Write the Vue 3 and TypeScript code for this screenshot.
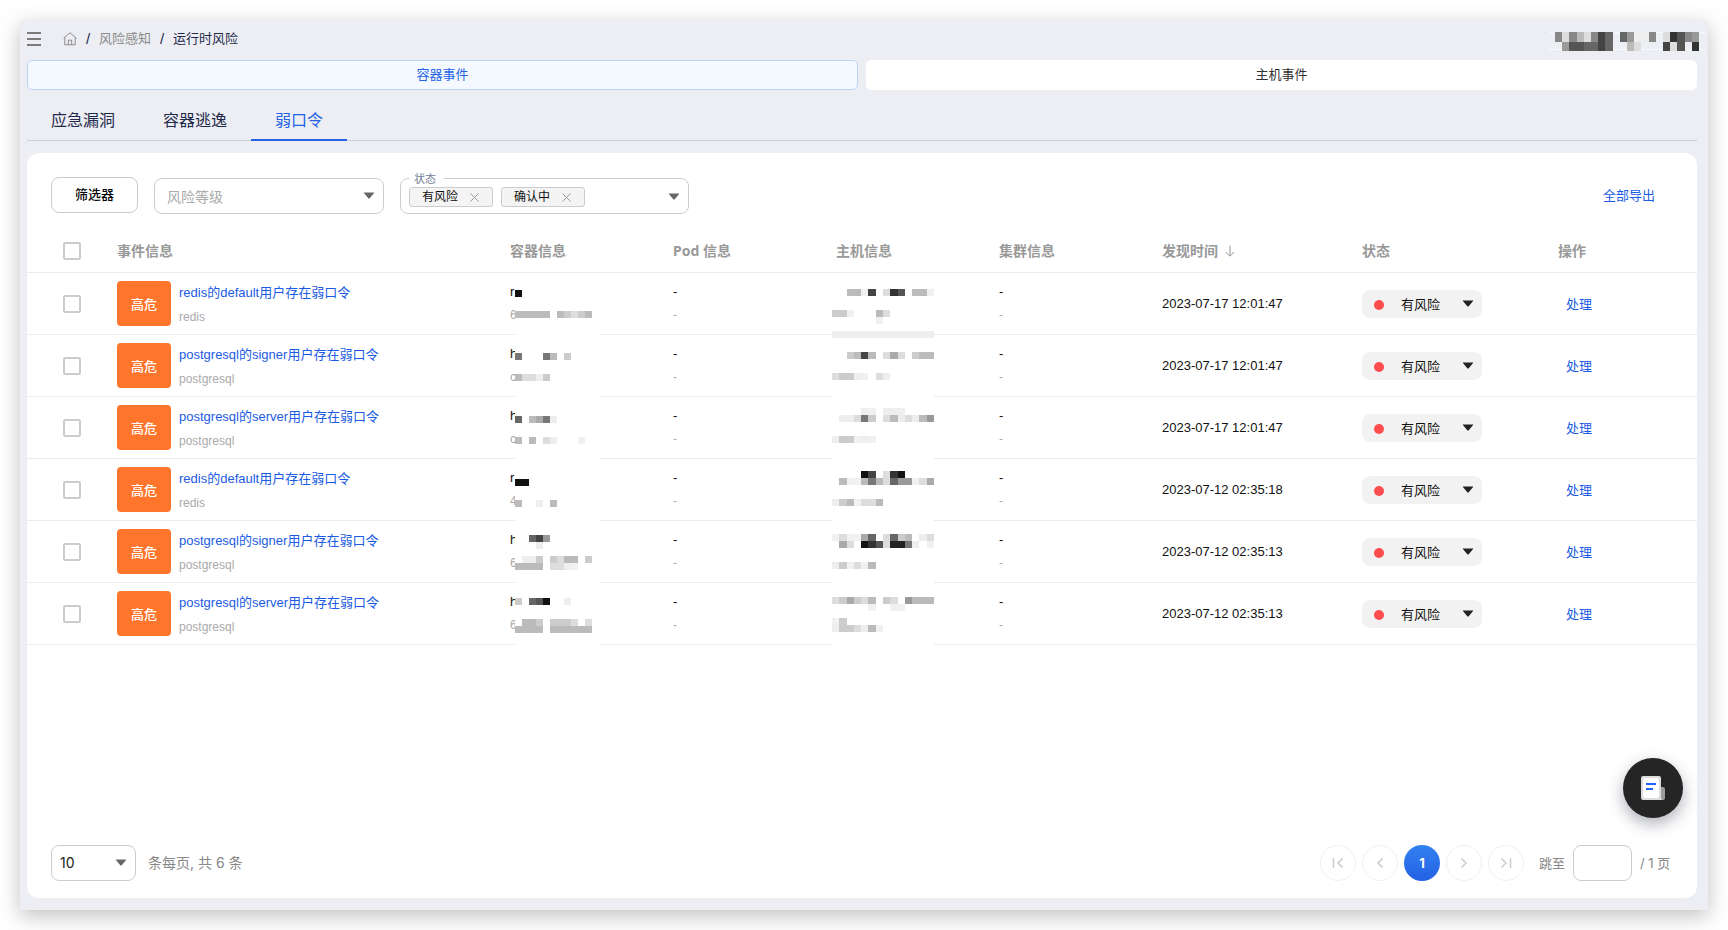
<script setup lang="ts">
import { reactive, ref } from 'vue'

interface Band {
  y: number
  cells: string
}

interface EventRow {
  title: string
  source: string
  time: string
  name: string
  id: string
  container: Band[]
  host: Band[]
}

const topTabs = ['容器事件', '主机事件']
const subTabs = ['应急漏洞', '容器逃逸', '弱口令']
const activeTop = ref(0)
const activeSub = ref(2)
const tags = ref(['有风险', '确认中'])
const selected = reactive<Record<number, boolean>>({})

const columns = ['事件信息', '容器信息', 'Pod 信息', '主机信息', '集群信息', '发现时间', '状态', '操作']

const rows: EventRow[] = [
  {
    title: 'redis的default用户存在弱口令',
    source: 'redis',
    time: '2023-07-17 12:01:47',
    name: 'r',
    id: '6',
    container: [{ y: 17, cells: '1' }, { y: 38, cells: 'bbbbb.bcdcb' }],
    host: [
      { y: 16, cells: '..bbf4.d35.bbf' },
      { y: 37, cells: 'ccf...bd' },
      { y: 44, cells: '......f' },
      { y: 58, cells: 'eeeeeeeeeeeeee' },
    ],
  },
  {
    title: 'postgresql的signer用户存在弱口令',
    source: 'postgresql',
    time: '2023-07-17 12:01:47',
    name: 'h',
    id: 'c',
    container: [{ y: 18, cells: '7...7b.c' }, { y: 39, cells: 'bddec' }],
    host: [
      { y: -4, cells: 'eeeeeeeeeeeeee' },
      { y: 17, cells: '..cb4b.dad.cbb' },
      { y: 38, cells: 'dccef.de' },
    ],
  },
  {
    title: 'postgresql的server用户存在弱口令',
    source: 'postgresql',
    time: '2023-07-17 12:01:47',
    name: 'h',
    id: 'c',
    container: [{ y: 19, cells: '6.ba7e' }, { y: 40, cells: 'b.b.de...f' }],
    host: [
      { y: 11, cells: '....ef.eee' },
      { y: 18, cells: '.eed7c.dbedeb9' },
      { y: 39, cells: 'eccfef' },
    ],
  },
  {
    title: 'redis的default用户存在弱口令',
    source: 'redis',
    time: '2023-07-12 02:35:18',
    name: 'r',
    id: '4',
    container: [{ y: 20, cells: '11' }, { y: 41, cells: 'b..e.b' }],
    host: [
      { y: 12, cells: '....14.d31' },
      { y: 19, cells: '.bffb7bd699fda' },
      { y: 40, cells: 'ecbfddb' },
    ],
  },
  {
    title: 'postgresql的signer用户存在弱口令',
    source: 'postgresql',
    time: '2023-07-12 02:35:13',
    name: 'h',
    id: '6',
    container: [
      { y: 14, cells: '..649' },
      { y: 21, cells: '...e' },
      { y: 35, cells: '.eec.cdbb.c' },
      { y: 42, cells: 'bbbb.ddef' },
    ],
    host: [
      { y: 13, cells: 'fdffa6.d6cb.ed' },
      { y: 20, cells: '.ad.135d227e.f' },
      { y: 41, cells: 'ecfdfb' },
    ],
  },
  {
    title: 'postgresql的server用户存在弱口令',
    source: 'postgresql',
    time: '2023-07-12 02:35:13',
    name: 'h',
    id: '6',
    container: [
      { y: 15, cells: 'c.651..e' },
      { y: 36, cells: '.bbc.cccd.d' },
      { y: 43, cells: 'bbbb.bbbbbb' },
    ],
    host: [
      { y: 14, cells: 'dcacdb.cd.9bbb' },
      { y: 21, cells: '.....f..ff' },
      { y: 35, cells: 'fc' },
      { y: 42, cells: 'eccdebf' },
    ],
  },
]

const accountBands: Band[] = [
  { y: 0, cells: '8d8bd846.69ee8.d3589' },
  { y: 7, cells: '.9556646..bd...4d5.3' },
]

// Expands bands of hex grey levels into 7 × 7 blocks; a dot leaves a block clear.
function blocks(bands: Band[]) {
  return bands.flatMap((band) =>
    [...band.cells].flatMap((c, i) =>
      c === '.' ? [] : [{ x: i * 7, y: band.y, fill: c === 'f' ? '#f1f1f1' : `#${c}${c}${c}` }],
    ),
  )
}

function removeTag(tag: string) {
  tags.value = tags.value.filter((t) => t !== tag)
}

function toggleAll(e: Event) {
  const on = (e.target as HTMLInputElement).checked
  rows.forEach((_, i) => (selected[i] = on))
}
</script>

<template>
  <div class="page">
    <div class="window">
      <header class="topbar">
        <button class="menu" type="button" aria-label="菜单">
          <svg width="14" height="14" viewBox="0 0 14 14"><path d="M0 1h14M0 7h14M0 13h14" stroke="#555" stroke-width="1.5" /></svg>
        </button>
        <nav class="crumbs" aria-label="breadcrumb">
          <a href="#" aria-label="首页" class="home">
            <svg width="14" height="14" viewBox="0 0 14 14" fill="none" stroke="#8c8c8c" stroke-linejoin="round">
              <path d="M.6 6.2 7 .8l6.4 5.4M1.8 5.4v7.4h10.4V5.4M5.3 12.6V8.2h3.4v4.4" />
            </svg>
          </a>
          <span class="slash">/</span>
          <a href="#">风险感知</a>
          <span class="slash">/</span>
          <span>运行时风险</span>
        </nav>
        <svg class="account" width="157" height="19" viewBox="0 0 157 19" aria-hidden="true">
          <rect width="157" height="19" fill="#eceff3" />
          <path d="M0 .5h157M0 17.5h157" stroke="#f6f8fa" />
          <svg x="6" y="0" width="144" height="19" viewBox="0 0 140 14" preserveAspectRatio="none" shape-rendering="crispEdges">
            <rect v-for="(b, i) in blocks(accountBands)" :key="i" :x="b.x" :y="b.y" width="7" height="7" :fill="b.fill" />
          </svg>
        </svg>
      </header>

      <div class="segments">
        <button
          v-for="(t, i) in topTabs"
          :key="t"
          type="button"
          :class="['segment', { active: activeTop === i }]"
          @click="activeTop = i"
        >{{ t }}</button>
      </div>

      <nav class="tabs">
        <button
          v-for="(t, i) in subTabs"
          :key="t"
          type="button"
          :class="['tab', { active: activeSub === i }]"
          @click="activeSub = i"
        >{{ t }}</button>
      </nav>

      <main class="panel">
        <div class="toolbar">
          <button class="filter" type="button">筛选器</button>
          <div class="picker level">
            <select aria-label="风险等级">
              <option>风险等级</option>
            </select>
            <svg class="caret" width="12" height="7" viewBox="0 0 12 7"><path d="M1.2.5h9.6q.8 0 .3.6L6.7 6.3q-.7.7-1.4 0L.9 1.1Q.4.5 1.2.5Z" fill="#666" /></svg>
          </div>
          <div class="picker states" role="group" aria-labelledby="state-label">
            <span id="state-label" class="float-label">状态</span>
            <span v-for="tag in tags" :key="tag" class="tag">
              {{ tag }}
              <button type="button" :aria-label="`移除 ${tag}`" @click="removeTag(tag)">
                <svg width="9" height="9" viewBox="0 0 9 9"><path d="m.5.5 8 8m0-8-8 8" stroke="#999" /></svg>
              </button>
            </span>
            <button class="open" type="button" aria-label="展开状态">
              <svg width="12" height="7" viewBox="0 0 12 7"><path d="M1.2.5h9.6q.8 0 .3.6L6.7 6.3q-.7.7-1.4 0L.9 1.1Q.4.5 1.2.5Z" fill="#666" /></svg>
            </button>
          </div>
          <a class="export" href="#">全部导出</a>
        </div>

        <table>
          <colgroup>
            <col class="c-check" />
            <col class="c-event" />
            <col class="c-info" />
            <col class="c-info" />
            <col class="c-info" />
            <col class="c-info" />
            <col class="c-time" />
            <col class="c-state" />
            <col class="c-action" />
          </colgroup>
          <thead>
            <tr>
              <th class="check"><input type="checkbox" aria-label="全选" @change="toggleAll" /></th>
              <th v-for="c in columns" :key="c" scope="col">
                {{ c }}
                <svg v-if="c === '发现时间'" class="sort" width="10" height="12" viewBox="0 0 10 12" fill="none" stroke="#999">
                  <path d="M5 .5V11M.8 7 5 11.2 9.2 7" />
                </svg>
              </th>
            </tr>
          </thead>
          <tbody>
            <tr v-for="(r, i) in rows" :key="i">
              <td class="check"><input v-model="selected[i]" type="checkbox" :aria-label="r.title" /></td>
              <td>
                <div class="event">
                  <span class="badge">高危</span>
                  <div class="lines">
                    <a href="#">{{ r.title }}</a>
                    <small>{{ r.source }}</small>
                  </div>
                </div>
              </td>
              <td class="masked">
                <div class="pair"><span>{{ r.name }}</span><small>{{ r.id }}</small></div>
                <svg class="mask mask-container" viewBox="0 0 84 62" preserveAspectRatio="none" shape-rendering="crispEdges" aria-hidden="true">
                  <rect v-for="(b, k) in blocks(r.container)" :key="k" :x="b.x" :y="b.y" width="7" height="7" :fill="b.fill" />
                </svg>
              </td>
              <td><div class="pair"><span>-</span><small>-</small></div></td>
              <td class="masked">
                <svg class="mask mask-host" viewBox="0 0 98 62" preserveAspectRatio="none" shape-rendering="crispEdges" aria-hidden="true">
                  <rect v-for="(b, k) in blocks(r.host)" :key="k" :x="b.x" :y="b.y" width="7" height="7" :fill="b.fill" />
                </svg>
              </td>
              <td><div class="pair"><span>-</span><small>-</small></div></td>
              <td>{{ r.time }}</td>
              <td>
                <div class="state">
                  <i class="dot"></i>
                  <select :aria-label="`${r.title} 状态`">
                    <option>有风险</option>
                    <option>确认中</option>
                  </select>
                  <svg class="caret" width="12" height="7" viewBox="0 0 12 7"><path d="M1.2.5h9.6q.8 0 .3.6L6.7 6.3q-.7.7-1.4 0L.9 1.1Q.4.5 1.2.5Z" fill="#222" /></svg>
                </div>
              </td>
              <td class="action"><a href="#">处理</a></td>
            </tr>
          </tbody>
        </table>

        <footer class="footer">
          <div class="picker size">
            <select id="page-size">
              <option>10</option>
              <option>20</option>
            </select>
            <svg class="caret" width="12" height="7" viewBox="0 0 12 7"><path d="M1.2.5h9.6q.8 0 .3.6L6.7 6.3q-.7.7-1.4 0L.9 1.1Q.4.5 1.2.5Z" fill="#666" /></svg>
          </div>
          <label class="total" for="page-size">条每页, 共 6 条</label>
          <div class="pager">
            <button type="button" aria-label="首页" disabled>
              <svg width="12" height="12" viewBox="0 0 12 12"><path d="M1.5 1v10M10.5 1.5 6 6l4.5 4.5" /></svg>
            </button>
            <button type="button" aria-label="上一页" disabled>
              <svg width="12" height="12" viewBox="0 0 12 12"><path d="M8.5 1.5 4 6l4.5 4.5" /></svg>
            </button>
            <button type="button" class="current">1</button>
            <button type="button" aria-label="下一页" disabled>
              <svg width="12" height="12" viewBox="0 0 12 12"><path d="M3.5 1.5 8 6l-4.5 4.5" /></svg>
            </button>
            <button type="button" aria-label="末页" disabled>
              <svg width="12" height="12" viewBox="0 0 12 12"><path d="M10.5 1v10M1.5 1.5 6 6l-4.5 4.5" /></svg>
            </button>
          </div>
          <label class="jump">跳至<input type="text" /><span>/ 1 页</span></label>
        </footer>
      </main>

      <button class="fab" type="button" aria-label="文档">
        <svg width="26" height="26" viewBox="0 0 26 26">
          <rect x="19" y="12" width="6" height="13" rx="2" fill="#9b9b9b" />
          <path d="M3 1h16q2 0 2 2v20q0 2 2 2H3q-2 0-2-2V3q0-2 2-2Z" fill="#dcdcdc" />
          <rect x="3" y="3" width="16" height="20" rx="2" fill="#fff" />
          <path d="M6 9h10M6 14h7" stroke="#1f62ff" stroke-width="2" />
        </svg>
      </button>
    </div>
  </div>
</template>

<style>
body {
  margin: 0;
  background: #fff;
}
</style>

<style scoped>
.page {
  box-sizing: border-box;
  min-height: 100vh;
  padding: 20px;
  display: flex;
  font-family: "Liberation Sans", "Noto Sans CJK SC", sans-serif;
  font-size: 13px;
  line-height: 20px;
  color: #111;
}
.page *,
.page *::before {
  box-sizing: border-box;
}
button,
input,
select {
  font: inherit;
  color: inherit;
  margin: 0;
  padding: 0;
  border: 0;
  background: none;
}
button {
  cursor: pointer;
}
select {
  appearance: none;
}
svg {
  display: block;
  flex: none;
}
a {
  color: #1c5be3;
  text-decoration: none;
}
.window {
  position: relative;
  flex: 1;
  min-width: 0;
  display: flex;
  flex-direction: column;
  padding: 0 11px 12px 7px;
  background: #edeef3;
  box-shadow: 0 6px 20px rgba(0, 0, 0, 0.25);
}
.topbar {
  display: flex;
  align-items: center;
  height: 40px;
  margin-right: -9px;
  padding-bottom: 2px;
}
.menu {
  width: 14px;
  height: 14px;
  margin-right: 22px;
}
.crumbs {
  display: flex;
  align-items: center;
  gap: 9px;
  color: #1f2a4d;
}
.slash {
  width: 4px;
  font-size: 15px;
  text-align: center;
}
.crumbs a {
  color: #8a8a8a;
}
.account {
  margin-left: auto;
  margin-top: 5px;
}
.segments {
  display: grid;
  grid-template-columns: 1fr 1fr;
  gap: 8px;
}
.segment {
  height: 30px;
  border: 1px solid #fff;
  border-radius: 5px;
  background: #fff;
  color: #333;
}
.segment.active {
  border-color: #bdd2fa;
  background: #f4f8ff;
  color: #2463e6;
}
.tabs {
  display: flex;
  height: 51px;
  border-bottom: 1px solid #cfcfd1;
}
.tab {
  height: 51px;
  padding: 12px 24px 0;
  border-bottom: 2px solid transparent;
  font-size: 16px;
  color: #1f2a4d;
}
.tab.active {
  border-bottom-color: #2463e6;
  color: #2463e6;
}
.panel {
  flex: 1;
  display: flex;
  flex-direction: column;
  margin-top: 12px;
  padding: 24px 0 17px;
  border-radius: 12px;
  background: #fff;
}
.toolbar {
  display: flex;
  align-items: flex-end;
  gap: 16px;
  height: 37px;
  margin-bottom: 16px;
  padding: 0 42px 0 24px;
}
.filter {
  align-self: flex-start;
  width: 87px;
  height: 36px;
  border: 1px solid #ccc;
  border-radius: 8px;
  font-weight: 500;
  color: #000;
}
.picker {
  position: relative;
  display: flex;
  align-items: center;
  height: 36px;
  border: 1px solid #ccc;
  border-radius: 8px;
  background: #fff;
}
.picker select {
  width: 100%;
  height: 100%;
}
.caret {
  position: absolute;
  right: 8px;
  top: 50%;
  margin-top: -4px;
  pointer-events: none;
}
.level {
  width: 230px;
}
.level select {
  padding: 2px 0 0 12px;
  font-size: 14px;
  color: #aaa;
}
.states {
  width: 289px;
  gap: 8px;
  padding: 0 8px;
}
.float-label {
  position: absolute;
  left: 8px;
  top: -8px;
  padding: 0 8px 0 5px;
  background: #fff;
  font-size: 11px;
  line-height: 16px;
  color: #718096;
}
.tag {
  display: flex;
  align-items: center;
  justify-content: space-between;
  width: 84px;
  height: 20px;
  margin-top: 2px;
  padding: 0 13px 0 12px;
  border: 1px solid #ccc;
  border-radius: 3px;
  background: #f4f4f4;
  font-size: 12px;
  line-height: 18px;
}
.open {
  margin-left: auto;
}
.export {
  margin: 0 0 8px auto;
}
table {
  width: 100%;
  table-layout: fixed;
  border-collapse: separate;
  border-spacing: 0;
}
.c-check {
  width: 90px;
}
.c-event {
  width: 393px;
}
.c-info {
  width: 163px;
}
.c-time {
  width: 200px;
}
.c-state {
  width: 196px;
}
.c-action {
  width: 139px;
}
th,
td {
  padding: 0;
  border-bottom: 1px solid #ebebeb;
  text-align: left;
  vertical-align: middle;
}
th {
  height: 43px;
  font-family: "Noto Sans", "Noto Sans CJK SC", sans-serif;
  font-size: 14px;
  font-weight: 700;
  color: #999;
}
td {
  height: 62px;
}
.check {
  padding-left: 36px;
}
.check input {
  appearance: none;
  display: block;
  width: 18px;
  height: 18px;
  border: 2px solid #ccc;
  border-radius: 2px;
  background: #fff;
}
.check input:checked {
  background: #2463e6;
  border-color: #2463e6;
}
.sort {
  display: inline-block;
  margin-left: 3px;
  vertical-align: -1px;
}
.event {
  display: flex;
  align-items: center;
  gap: 8px;
}
.badge {
  width: 54px;
  height: 45px;
  border-radius: 4px;
  background: #ff752b;
  color: #fff;
  font-weight: 500;
  line-height: 47px;
  text-align: center;
}
.lines {
  padding-top: 2px;
}
.lines a,
.lines small {
  display: block;
}
.lines small {
  margin-top: 4px;
}
small {
  font-size: 12px;
  color: #aaa;
}
.pair span,
.pair small {
  display: block;
}
.pair small {
  margin-top: 3px;
}
.masked {
  position: relative;
}
.mask {
  position: absolute;
  top: 0;
  height: 62px;
  background: #fff;
}
.mask-container {
  left: 5px;
  width: 84px;
}
.mask-host {
  left: -4px;
  width: 102px;
}
.state {
  position: relative;
  width: 120px;
  height: 28px;
  border-radius: 8px;
  background: #f2f2f2;
}
.state select {
  width: 100%;
  height: 100%;
  padding: 2px 0 0 39px;
}
.dot {
  position: absolute;
  left: 12px;
  top: 10px;
  width: 10px;
  height: 10px;
  border-radius: 50%;
  background: #ff4d4f;
}
.action {
  padding: 2px 0 0 8px;
}
.footer {
  display: flex;
  align-items: center;
  margin-top: auto;
  padding: 0 24px;
  font-family: Inter, "Noto Sans CJK SC", sans-serif;
  color: #888;
}
.size {
  width: 85px;
}
.size select {
  padding-left: 8px;
  font-size: 14px;
  color: #222;
}
.total {
  margin-left: 12px;
  font-size: 14px;
}
.pager {
  display: flex;
  gap: 6px;
  margin-left: auto;
}
.pager button {
  display: grid;
  place-items: center;
  width: 36px;
  height: 36px;
  border: 1px solid #f0f0f0;
  border-radius: 50%;
}
.pager svg {
  fill: none;
  stroke: #ccc;
  stroke-width: 1.5;
}
.pager .current {
  border: 0;
  background: linear-gradient(#3182f0, #2460e4);
  color: #fff;
  font-weight: 700;
}
.jump {
  display: flex;
  align-items: center;
  gap: 8px;
  margin-left: 15px;
}
.jump span {
  min-width: 33px;
}
.jump input {
  width: 59px;
  height: 36px;
  padding: 0 8px;
  border: 1px solid #ccc;
  border-radius: 8px;
}
.fab {
  position: absolute;
  right: 25px;
  bottom: 92px;
  display: grid;
  place-items: center;
  width: 60px;
  height: 60px;
  border-radius: 50%;
  background: #252525;
  box-shadow: 0 6px 16px rgba(30, 35, 60, 0.35);
}
</style>
